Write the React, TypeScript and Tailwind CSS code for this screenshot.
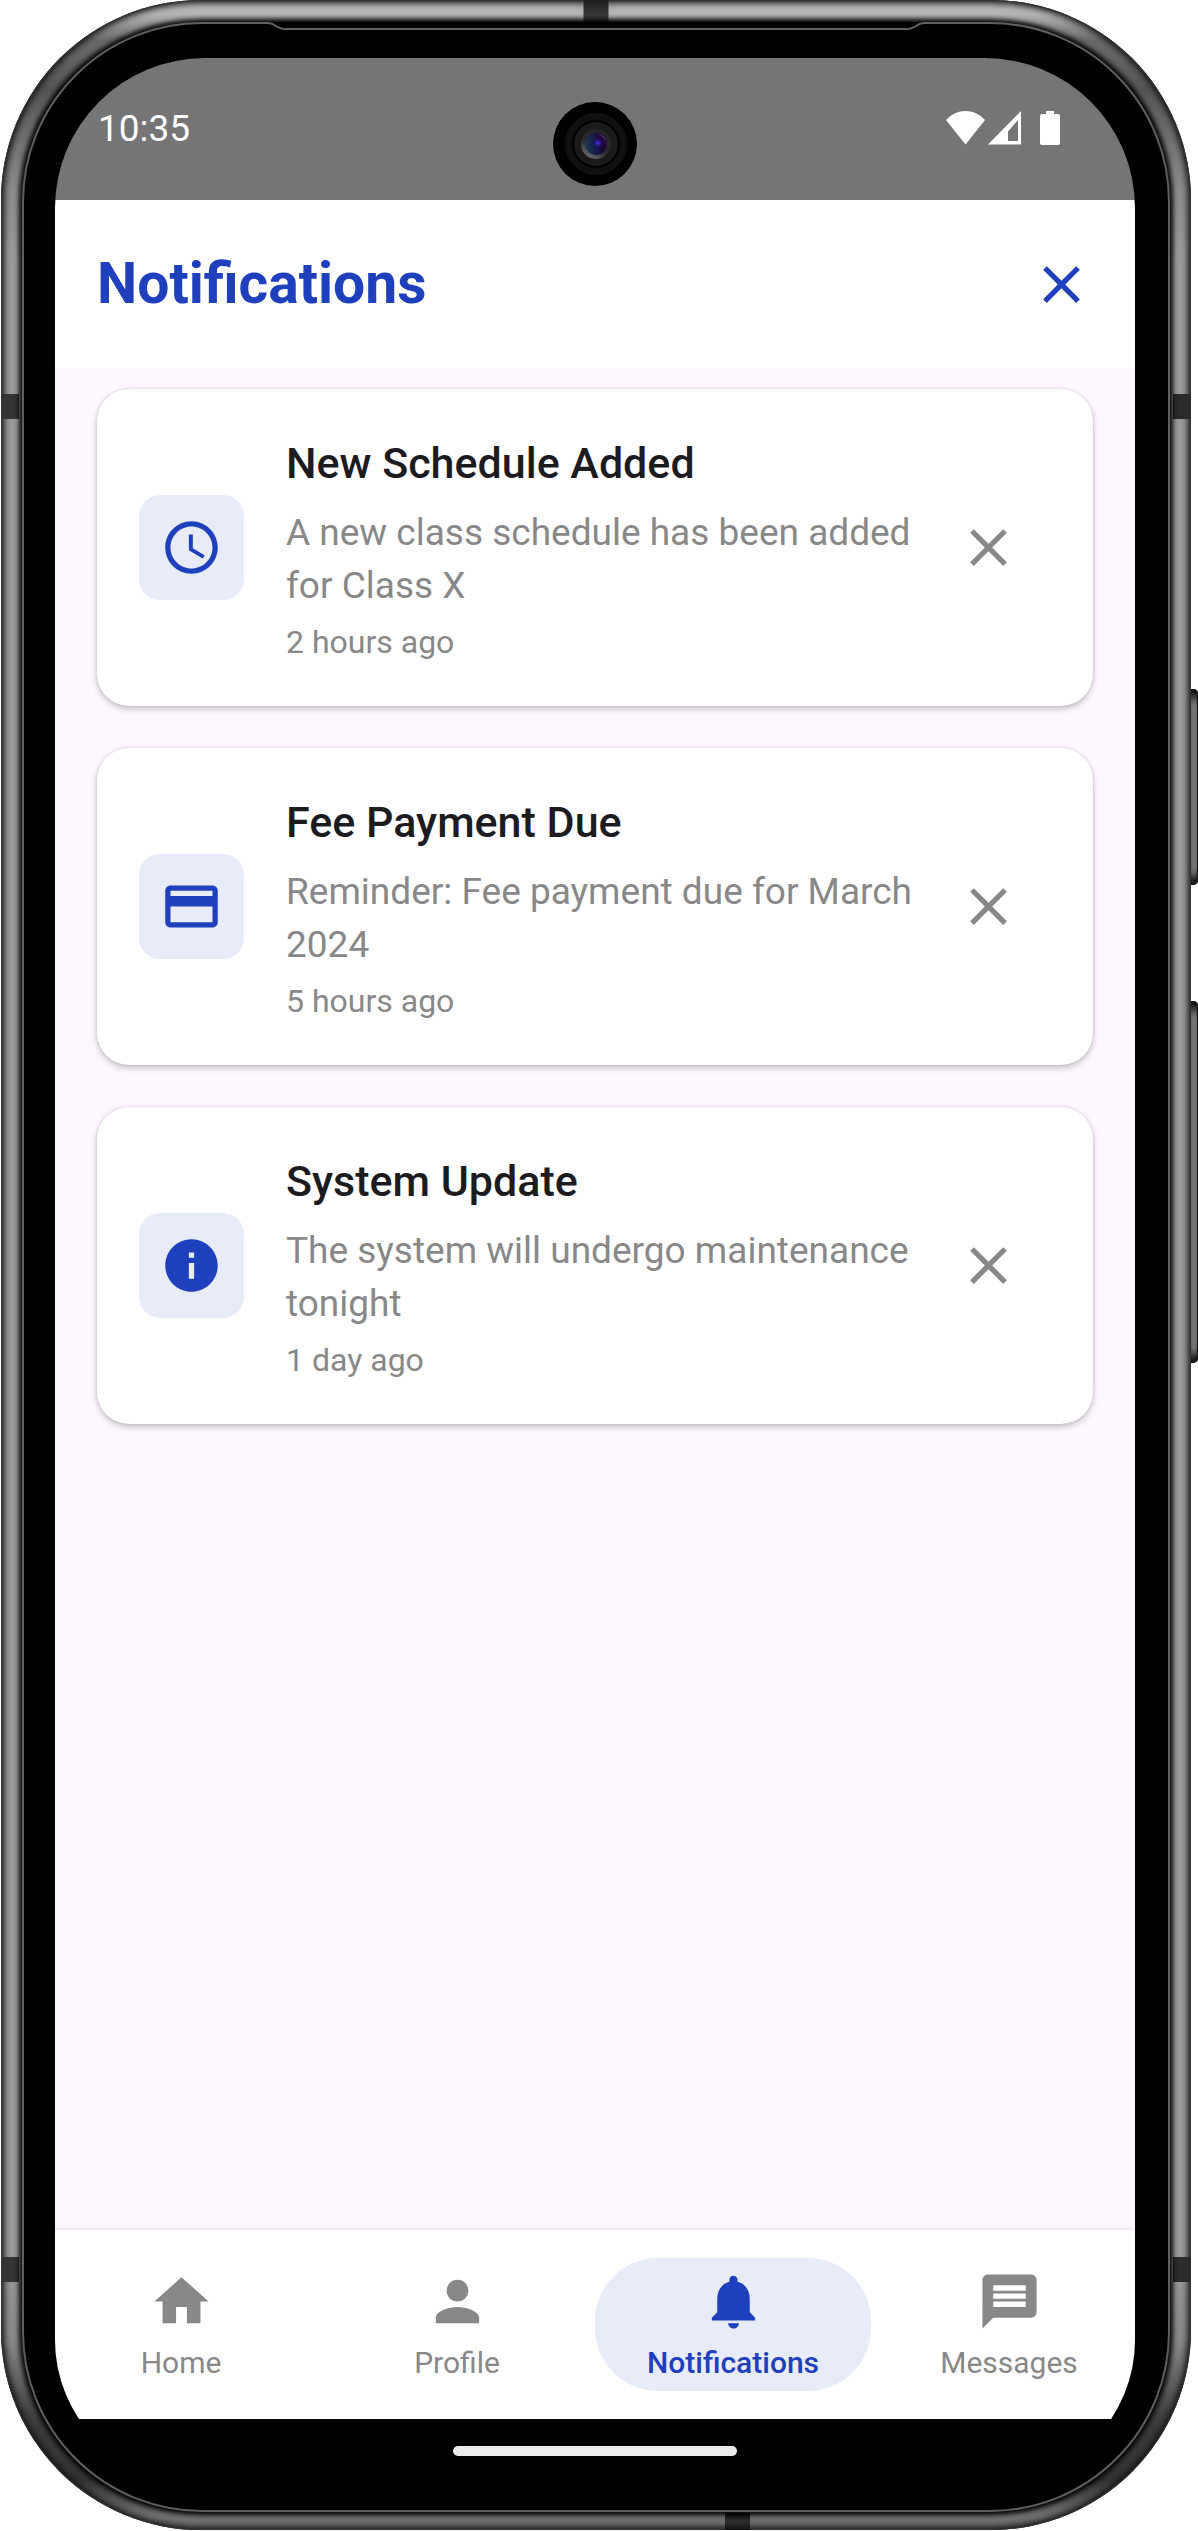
import type { ReactNode } from "react";
import {
  MdAccessTime,
  MdClose,
  MdCreditCard,
  MdHome,
  MdInfo,
  MdMessage,
  MdNotifications,
  MdPerson,
} from "react-icons/md";

type Notice = { title: string; text: string; time: string; icon: ReactNode };

const notices: Notice[] = [
  {
    title: "New Schedule Added",
    text: "A new class schedule has been added for Class X",
    time: "2 hours ago",
    icon: <MdAccessTime size={63} />,
  },
  {
    title: "Fee Payment Due",
    text: "Reminder: Fee payment due for March 2024",
    time: "5 hours ago",
    icon: <MdCreditCard size={63} />,
  },
  {
    title: "System Update",
    text: "The system will undergo maintenance tonight",
    time: "1 day ago",
    icon: <MdInfo size={63} />,
  },
];

const tabs = [
  { label: "Home", icon: <MdHome size={65} />, active: false },
  { label: "Profile", icon: <MdPerson size={65} />, active: false },
  { label: "Notifications", icon: <MdNotifications size={65} />, active: true },
  { label: "Messages", icon: <MdMessage size={65} />, active: false },
];

function StatusBar() {
  return (
    <div className="relative flex h-[142px] shrink-0 items-center justify-between bg-[#757575] pr-[75px] pb-[2px] pl-[43px] text-white">
      <span className="text-[37px] leading-none">10:35</span>
      <svg width="114" height="34" viewBox="0 0 114 34" fill="currentColor" aria-hidden="true">
        <path d="M0 9C11-3 28-3 39 9L19.5 33.500Z" />
        <path fillRule="evenodd" d="M75 0V33.500H42ZM72 9L62 20.500V30H72Z" />
        <path d="M100 0h8v3h4q2 0 2 2v27q0 2-2 2H96q-2 0-2-2V5q0-2 2-2h4z" />
      </svg>
      <Camera />
    </div>
  );
}

function Camera() {
  return (
    <svg className="absolute top-[44px] left-1/2 -translate-x-1/2" width="84" height="84" viewBox="0 0 84 84" aria-hidden="true">
      <defs>
        <linearGradient id="lens" x1="0" y1="0.6" x2="1" y2="0.4">
          <stop offset="0" stopColor="#1d3f4e" />
          <stop offset="0.45" stopColor="#141a4a" />
          <stop offset="0.75" stopColor="#1c0636" />
          <stop offset="1" stopColor="#2a0a44" />
        </linearGradient>
        <radialGradient id="glint">
          <stop offset="0" stopColor="#4a35ff" />
          <stop offset="1" stopColor="#2a10a0" stopOpacity="0" />
        </radialGradient>
        <linearGradient id="rim" x1="0.2" y1="1" x2="0.8" y2="0">
          <stop offset="0" stopColor="#777777" />
          <stop offset="0.4" stopColor="#2a2a2a" />
          <stop offset="1" stopColor="#242424" />
        </linearGradient>
      </defs>
      <circle cx="42" cy="42" r="42" fill="#000" />
      <circle cx="43" cy="42" r="31" fill="#101010" />
      <circle cx="43" cy="42" r="24" fill="#000" />
      <circle cx="43" cy="42" r="22" fill="#1a1a1a" />
      <circle cx="43" cy="42" r="15" fill="url(#rim)" />
      <circle cx="43" cy="42" r="11" fill="url(#lens)" />
      <path d="M45 32a11 11 0 0 1 8 7q-3-5-8-7z" fill="#a94fc0" />
      <circle cx="45" cy="41" r="5" fill="url(#glint)" />
    </svg>
  );
}

function NoticeCard({ title, text, time, icon }: Notice) {
  return (
    <li className="flex min-h-[317px] items-center rounded-[32px] bg-white p-[42px] shadow-[0_3px_6px_rgba(0,0,0,0.22),0_0_3px_rgba(0,0,0,0.12)]">
      <span className="flex size-[105px] shrink-0 items-center justify-center rounded-[21px] bg-[#e8ecf8] text-[#1e40bd]">
        {icon}
      </span>
      <div className="ml-[42px] min-w-0 flex-1">
        <h2 className="text-[43px] leading-[63px] font-medium text-[#1c1b1f]">{title}</h2>
        <p className="mt-[11px] text-[37px] leading-[53px] text-[#888888]">{text}</p>
        <p className="mt-[9px] text-[32px] leading-[42px] text-[#888888]">{time}</p>
      </div>
      <button type="button" aria-label={`Dismiss ${title}`} className="flex size-[126px] shrink-0 items-center justify-center text-[#888888]">
        <MdClose size={63} />
      </button>
    </li>
  );
}

function TabBar() {
  return (
    <nav className="relative shrink-0 bg-white py-7 shadow-[0_0_5px_rgba(60,20,60,0.18)]">
      <ul className="-mx-3 grid grid-cols-4">
        {tabs.map((tab) => (
          <li key={tab.label}>
            <a
              href="#"
              aria-current={tab.active ? "page" : undefined}
              className={
                tab.active
                  ? "flex h-[133px] flex-col items-center rounded-[63px] bg-[#e8ecf8] pt-[11px] font-medium text-[#1e40bd]"
                  : "flex h-[133px] flex-col items-center pt-[11px] text-[#888888]"
              }
            >
              {tab.icon}
              <span className="mt-2 text-[30px] leading-[42px]">{tab.label}</span>
            </a>
          </li>
        ))}
      </ul>
    </nav>
  );
}

function FrameDetails() {
  return (
    <>
      <span className="absolute top-0 left-1/2 h-[22px] w-[25px] -translate-x-1/2 bg-linear-to-b from-[#1c1c1c] to-[#4a4a4a]" />
      <span className="absolute bottom-0 left-[724px] h-[17px] w-[25px] bg-linear-to-b from-[#111111] via-[#303030] to-[#111111]" />
      <span className="absolute top-[394px] left-0 h-[25px] w-[18px] bg-[#353535]" />
      <span className="absolute top-[394px] right-0 h-[25px] w-[18px] bg-[#2b2b2b]" />
      <span className="absolute bottom-[248px] left-0 h-[25px] w-[18px] bg-[#353535]" />
      <span className="absolute right-0 bottom-[248px] h-[25px] w-[18px] bg-[#2b2b2b]" />
      <span className="absolute top-[689px] -right-[7px] h-[196px] w-[7px] rounded-r-[5px] bg-[#8a8a8a] shadow-[inset_-1px_0_1px_#111,inset_0_12px_8px_-4px_#111,inset_0_-12px_8px_-4px_#111]" />
      <span className="absolute top-[1001px] -right-[7px] h-[362px] w-[7px] rounded-r-[5px] bg-[#8a8a8a] shadow-[inset_-1px_0_1px_#111,inset_0_12px_8px_-4px_#111,inset_0_-12px_8px_-4px_#111]" />
    </>
  );
}

function EarpieceLine() {
  return (
    <svg className="absolute -top-[2px] left-1/2 -translate-x-1/2" width="664" height="9" viewBox="0 0 664 9" aria-hidden="true">
      <path d="M0 0H664V9H0Z" fill="#000" />
      <path d="M0 1H4C12 1 12 7 20 7H644C652 7 652 1 660 1H664" fill="none" stroke="#5f5f5f" strokeWidth="2" />
    </svg>
  );
}

export default function App() {
  return (
    <div className="flex min-h-screen bg-white pr-[7px] pb-px pl-px font-[Roboto,sans-serif]">
      <div className="relative flex flex-1 rounded-[200px] bg-[linear-gradient(to_bottom,#b4b4b4_0px,#b4b4b4_14px,#6a6a6a_40px,#555_90px,#8c8c8c_190px,#9a9a9a_260px,#9a9a9a_calc(100%-270px),#888_calc(100%-190px),#3c3c3c_calc(100%-110px),#333_calc(100%-50px),#707070_calc(100%-14px),#707070_100%)] px-[21px] pt-[22px] pb-[18px] shadow-[inset_0_0_0_1px_#333,inset_0_0_6px_3px_#111]">
        <FrameDetails />
        <div className="relative flex flex-1 rounded-[180px] border-2 border-[#5f5f5f] bg-black pt-[34px] pr-[33px] pb-[28px] pl-[31px] shadow-[0_0_5px_3px_#000]">
          <EarpieceLine />
          <main className="flex flex-1 flex-col overflow-hidden rounded-t-[150px] rounded-b-[142px] bg-black">
            <StatusBar />
            <header className="flex shrink-0 items-center justify-between bg-white px-[42px] py-[42px]">
              <h1 className="text-[57px] leading-[84px] font-bold text-[#1e40bd]">Notifications</h1>
              <button type="button" aria-label="Close notifications" className="text-[#1e40bd]">
                <MdClose size={63} />
              </button>
            </header>
            <ul className="flex flex-1 flex-col gap-[42px] bg-[#fef7ff] px-[42px] pt-[21px] pb-[42px]">
              {notices.map((notice) => (
                <NoticeCard key={notice.title} {...notice} />
              ))}
            </ul>
            <TabBar />
            <div className="flex h-[63px] shrink-0 items-center justify-center bg-black">
              <span className="h-[10px] w-[284px] rounded-full bg-[#ebebeb]" />
            </div>
          </main>
        </div>
      </div>
    </div>
  );
}
